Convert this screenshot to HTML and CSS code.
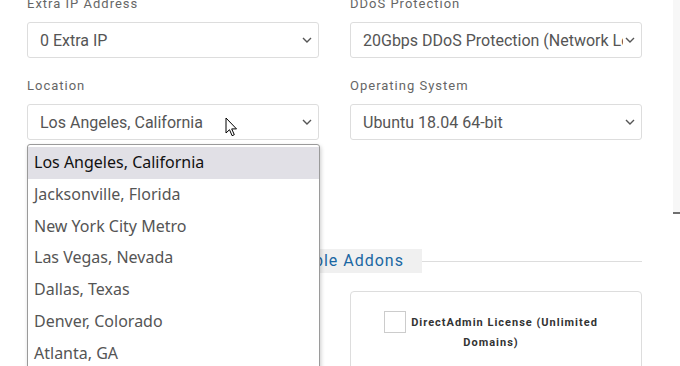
FILE: index.html
```html
<!DOCTYPE html>
<html>
<head>
    <title>Configure Server</title>
    <link rel="stylesheet" href="styles.css">
</head>
<body>
    <div class="page">
        <div class="form-grid">
            <div class="form-group">
                <label>Extra IP Address</label>
                <div class="select">
                    <span>0 Extra IP</span>
                    <svg class="caret" width="10" height="6" viewBox="0 0 10 6"><path d="M1 1l4 4 4-4" fill="none" stroke="#555" stroke-width="1.4"/></svg>
                </div>
            </div>
            <div class="form-group">
                <label>DDoS Protection</label>
                <div class="select">
                    <span>20Gbps DDoS Protection (Network Level)</span>
                    <svg class="caret" width="10" height="6" viewBox="0 0 10 6"><path d="M1 1l4 4 4-4" fill="none" stroke="#555" stroke-width="1.4"/></svg>
                </div>
            </div>
            <div class="form-group">
                <label>Location</label>
                <div class="select">
                    <span>Los Angeles, California</span>
                    <svg class="caret" width="10" height="6" viewBox="0 0 10 6"><path d="M1 1l4 4 4-4" fill="none" stroke="#555" stroke-width="1.4"/></svg>
                </div>
            </div>
            <div class="form-group">
                <label>Operating System</label>
                <div class="select">
                    <span>Ubuntu 18.04 64-bit</span>
                    <svg class="caret" width="10" height="6" viewBox="0 0 10 6"><path d="M1 1l4 4 4-4" fill="none" stroke="#555" stroke-width="1.4"/></svg>
                </div>
            </div>
        </div>

        <div class="section-title">
            <span>Available Addons</span>
        </div>

        <div class="addons">
            <div class="addon">
                <label class="addon-label"><span class="checkbox"></span>cPanel License</label>
            </div>
            <div class="addon">
                <label class="addon-label"><span class="checkbox"></span>DirectAdmin License (Unlimited Domains)</label>
            </div>
        </div>
    </div>

    <!-- open dropdown of the Location select -->
    <ul class="dropdown">
        <li class="active">Los Angeles, California</li>
        <li>Jacksonville, Florida</li>
        <li>New York City Metro</li>
        <li>Las Vegas, Nevada</li>
        <li>Dallas, Texas</li>
        <li>Denver, Colorado</li>
        <li>Atlanta, GA</li>
        <li>Seattle, Washington</li>
    </ul>

    <div class="side-panel"></div>

    <svg class="cursor" width="13" height="20" viewBox="0 0 13 20">
        <path d="M1 1v15l3.5-3.3 2.6 6 2.2-1-2.6-5.8h4.8z" fill="#fff" stroke="#000" stroke-width="1" stroke-linejoin="round"/>
    </svg>
</body>
</html>
```

FILE: styles.css
```css
body {
    margin: 0;
    font-family: Roboto, "Liberation Sans", sans-serif;
    background: #fff;
    overflow: hidden;
    height: 366px;
}
.page {
    padding: 0 38px 0 27px;
    margin-top: -6px;
}
.form-grid {
    display: grid;
    grid-template-columns: 292px 292px;
    column-gap: 31px;
    row-gap: 18px;
}
.form-group label {
    display: block;
    font-size: 13px;
    line-height: 20px;
    letter-spacing: 1px;
    color: #666;
    margin-bottom: 8px;
}
.select {
    height: 36px;
    box-sizing: border-box;
    border: 1px solid #ddd;
    border-radius: 3px;
    display: flex;
    align-items: center;
    padding: 0 6px 0 12px;
    font-size: 16px;
    color: #555;
}
.select span {
    flex: 1;
    white-space: nowrap;
    overflow: hidden;
}
.caret {
    flex: none;
    margin-left: 2px;
}
.section-title {
    margin-top: 109px;
    width: 615px;
    display: flex;
    align-items: center;
    justify-content: center;
    background: linear-gradient(#ddd, #ddd) center / 100% 1px no-repeat;
    height: 24px;
}
.section-title span {
    background: #f0f0f0;
    color: #1a67a3;
    font-size: 16px;
    letter-spacing: 1px;
    line-height: 24px;
    padding: 0 18px;
}
.addons {
    display: grid;
    grid-template-columns: 292px 292px;
    column-gap: 31px;
    margin-top: 18px;
}
.addon {
    border: 1px solid #ddd;
    border-radius: 4px;
    height: 120px;
    padding: 21px 35px 20px 25px;
    box-sizing: border-box;
}
.addon-label {
    display: block;
    text-align: center;
    font-size: 11px;
    font-weight: bold;
    letter-spacing: 1px;
    line-height: 20px;
    color: #333;
}
.checkbox {
    display: inline-block;
    width: 20px;
    height: 20px;
    border: 1px solid #ccc;
    vertical-align: middle;
    margin-right: 5px;
    margin-top: -2px;
}
.dropdown {
    position: absolute;
    left: 27px;
    top: 144px;
    width: 291px;
    margin: 0;
    padding: 2px 0 1px;
    list-style: none;
    background: #fff;
    border: 1px solid #9a9a9a;
    border-radius: 3px 3px 0 0;
    box-shadow: 1px 2px 4px rgba(0, 0, 0, 0.2);
    font-family: "Noto Sans", "Open Sans", sans-serif;
    font-size: 16px;
}
.dropdown li {
    height: 31.8px;
    line-height: 31.8px;
    padding: 0 6px;
    color: #555;
    white-space: nowrap;
}
.dropdown li.active {
    background: #e1e0e6;
    color: #111;
}
.side-panel {
    position: absolute;
    right: 0;
    top: 0;
    width: 7px;
    height: 212px;
    background: #f7f7f7;
    border-bottom: 2px solid #6f6f6f;
}
.cursor {
    position: absolute;
    left: 225px;
    top: 117px;
}
```
